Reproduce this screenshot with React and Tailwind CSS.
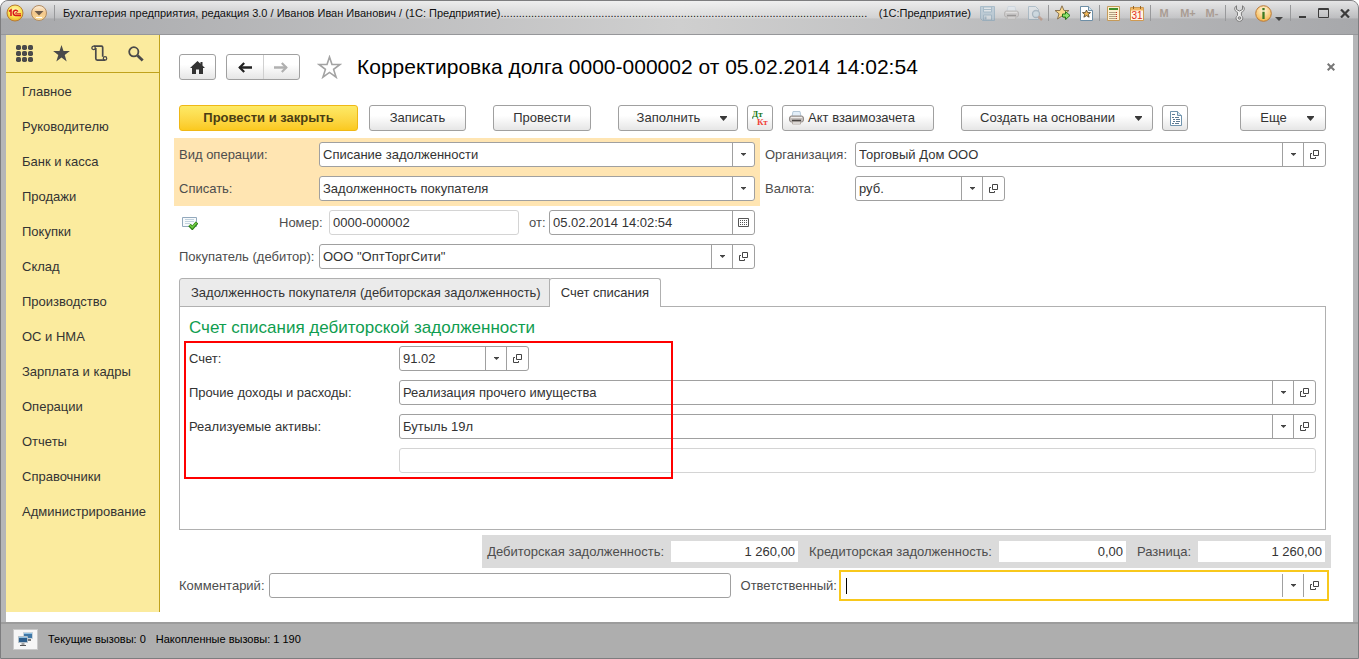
import React from 'react';

const MENU = [
  'Главное',
  'Руководителю',
  'Банк и касса',
  'Продажи',
  'Покупки',
  'Склад',
  'Производство',
  'ОС и НМА',
  'Зарплата и кадры',
  'Операции',
  'Отчеты',
  'Справочники',
  'Администрирование',
];

const TITLE =
  'Бухгалтерия предприятия, редакция 3.0 / Иванов Иван Иванович / (1С: Предприятие)' +
  '.'.repeat(120);

/* ---------- Icons ---------- */

const Caret = () => (
  <svg width="7" height="5" viewBox="0 0 7 5" fill="#3a3a3a" aria-hidden="true">
    <path d="M0 0h7v1L3.500 5 0 1z" />
  </svg>
);

const SmallCaret = () => (
  <svg width="5" height="3" viewBox="0 0 5 3" fill="#444" aria-hidden="true">
    <path d="M0 0h5v.6L2.500 3 0 .6z" />
  </svg>
);

const OpenIcon = () => (
  <svg width="9" height="9" viewBox="0 0 9 9" fill="none" stroke="#444" aria-hidden="true">
    <path d="M3.500 .5h5v5h-5zM2 3.500H.5v5h5V7" />
  </svg>
);

const CalendarIcon = () => (
  <svg width="11" height="9" viewBox="0 0 11 9" fill="none" stroke="#555" aria-hidden="true">
    <path d="M.5 .5h10v8H.5z" />
    <path d="M2 2.500h8M2 4.500h8M2 6.500h8" strokeDasharray="1 1" />
  </svg>
);

const GridIcon = () => (
  <svg width="17" height="17" viewBox="0 0 17 17" fill="#4a4a4a" aria-hidden="true">
    {[0, 6, 12].map((y) =>
      [0, 6, 12].map((x) => <rect key={`${x}-${y}`} x={x} y={y} width="5" height="5" rx="1.7" />)
    )}
  </svg>
);

const StarIcon = () => (
  <svg width="17" height="17" viewBox="0 0 17 17" fill="#4a4a4a" aria-hidden="true">
    <path d="M8.500 0l2 6.100h6.400l-5.200 3.900 2 6.400-5.200-4-5.200 4 2-6.400L.1 6.100h6.400z" />
  </svg>
);

const ScrollIcon = () => (
  <svg width="17" height="17" viewBox="0 0 17 17" fill="none" stroke="#4a4a4a" strokeWidth="1.700" aria-hidden="true">
    <path d="M2.800 1.200h7.700c.8 0 1.200.4 1.200 1.200v9.300M4.800 3v10.600c0 .9.5 1.500 1.400 1.500h8" />
    <circle cx="2.600" cy="2.900" r="1.700" strokeWidth="1.300" />
    <circle cx="14" cy="13.400" r="1.700" strokeWidth="1.300" />
  </svg>
);

const SearchIcon = () => (
  <svg width="16" height="16" viewBox="0 0 16 16" fill="none" stroke="#4a4a4a" aria-hidden="true">
    <circle cx="5.800" cy="5.800" r="4.600" strokeWidth="1.800" />
    <path d="M9.500 9.500l5.200 5" strokeWidth="2.800" />
  </svg>
);

const HomeIcon = () => (
  <svg width="15" height="13" viewBox="0 0 15 13" fill="#333" aria-hidden="true">
    <path d="M7.500 0L0 7h2v6h4V8.500h3V13h4V7h2l-2.500-2.400V1h-2v1.700z" />
  </svg>
);

const ArrowIcon = ({ color, flip }) => (
  <svg width="14" height="11" viewBox="0 0 14 11" fill="none" stroke={color} className={flip ? 'rotate-180' : ''} aria-hidden="true">
    <path d="M1.500 5.500H14" strokeWidth="2.400" />
    <path d="M6.200 .9L1.700 5.500l4.500 4.600" strokeWidth="2.200" />
  </svg>
);

const OutlineStar = () => (
  <svg width="25" height="24" viewBox="0 0 25 24" fill="#fff" stroke="#a3a3a3" strokeWidth="1.600" aria-hidden="true">
    <path d="M12.500 2l2.500 7.500h8l-6.400 4.900 2.500 7.800-6.600-4.800-6.600 4.800 2.500-7.800L2 9.500h8z" />
  </svg>
);

const PostedIcon = () => (
  <svg width="16" height="13" viewBox="0 0 16 13" aria-hidden="true">
    <path d="M.5 .5h14v9H.5z" fill="#f7fafc" stroke="#93a9bd" />
    <path d="M3 2.500h9M3 4.500h9M3 6.500h5" stroke="#c3d3df" />
    <path d="M7.500 8l2.800 3 4.700-5.500" fill="none" stroke="#2d7d16" strokeWidth="3.400" />
    <path d="M7.800 8l2.500 2.500 4.200-4.800" fill="none" stroke="#6dcb42" strokeWidth="1.700" />
  </svg>
);

const PrinterIcon = () => (
  <svg width="15" height="14" viewBox="0 0 15 14" aria-hidden="true">
    <path d="M4 .5h7l1 5H3z" fill="#e4eff9" stroke="#b5c8d8" />
    <rect x=".5" y="5" width="14" height="6" rx="2" fill="#c2bdba" stroke="#918b88" />
    <path d="M2 6.500h11" stroke="#eeebe9" />
    <path d="M3 9.500h9" stroke="#4a4644" strokeWidth="1.500" />
    <path d="M3.500 11h8v2h-8z" fill="#fff" stroke="#b5ada7" />
  </svg>
);

const ReportIcon = () => (
  <svg width="13" height="15" viewBox="0 0 13 15" fill="none" aria-hidden="true">
    <path d="M1.500 .5h7l4 4v10h-11z" fill="#fff" stroke="#6f93ad" />
    <path d="M8.500 .5v4h4" stroke="#6f93ad" fill="#d6e5ef" />
    <path d="M3 3.500h3M3 6.500h2m1 0h4M4 8.500h2m1 0h4M4 10.500h2m1 0h4M3 12.500h2m1 0h4" stroke="#5d7a92" />
  </svg>
);

const LogoIcon = () => (
  <svg width="18" height="18" viewBox="0 0 18 18" aria-hidden="true">
    <defs>
      <radialGradient id="logo" cx=".5" cy=".35" r=".7">
        <stop offset="0" stopColor="#fffbc0" />
        <stop offset=".6" stopColor="#fbe04c" />
        <stop offset="1" stopColor="#e5a41d" />
      </radialGradient>
    </defs>
    <circle cx="9" cy="9" r="8" fill="url(#logo)" stroke="#b77b35" />
    <path d="M3 7.300l2-1.300v6M11.800 7.600c-.5-1.100-1.500-1.500-2.500-1.300-3 .6-2.500 5.100.4 5.100H15" fill="none" stroke="#d8161c" strokeWidth="1.500" />
    <path d="M11.200 8.600c-1.600-.6-2.300.8-1 1.200H15" fill="none" stroke="#d8161c" />
  </svg>
);

const MenuButtonIcon = () => (
  <svg width="18" height="18" viewBox="0 0 18 18" aria-hidden="true">
    <defs>
      <linearGradient id="menu" x1="0" x2="0" y1="0" y2="1">
        <stop offset="0" stopColor="#fdf0dc" />
        <stop offset=".5" stopColor="#f3c78a" />
        <stop offset="1" stopColor="#fbdf9c" />
      </linearGradient>
    </defs>
    <circle cx="9" cy="9" r="7.500" fill="url(#menu)" stroke="#b08a62" />
    <path d="M4.500 7h9L9 11.500z" fill="#6b5a4b" />
    <path d="M6 13.500h6" stroke="#fff" />
  </svg>
);

const SaveIcon = () => (
  <svg width="15" height="15" viewBox="0 0 15 15" opacity=".55" aria-hidden="true">
    <path d="M.5 .5h14v14H2.500l-2-2z" fill="#a9c2d3" stroke="#7fa1b8" />
    <path d="M3.500 1h8v5h-8z" fill="#e3ebf0" stroke="#7fa1b8" />
    <path d="M4 3.500h7" stroke="#7fa1b8" />
    <path d="M3.500 9h8v5h-8z" fill="#d7e0e6" stroke="#7fa1b8" />
    <path d="M5.500 10.500v3" stroke="#7fa1b8" strokeWidth="2" />
  </svg>
);

const PreviewIcon = () => (
  <svg width="15" height="15" viewBox="0 0 15 15" opacity=".6" aria-hidden="true">
    <path d="M.5 .5h7l3 3v10H.5z" fill="#dfe5ea" stroke="#91a9ba" />
    <circle cx="8" cy="8" r="3.500" fill="#c9dbe6" stroke="#8da3b3" strokeWidth="1.300" />
    <path d="M10.500 10.500l3.500 3.500" stroke="#b98a72" strokeWidth="2.500" />
  </svg>
);

const AddFavoriteIcon = () => (
  <svg width="17" height="16" viewBox="0 0 17 16" aria-hidden="true">
    <path d="M8 .8l2 4.700h5l-4 3.300 1.500 5.200L8 11l-4.500 3L5 8.800 1 5.500h5z" fill="#fbd98c" stroke="#8a7350" />
    <path d="M8.500 9h3V6.500L16 10.500l-4.500 4V12h-3z" fill="#8fe36b" stroke="#25751a" />
  </svg>
);

const FavoritesIcon = () => (
  <svg width="13" height="15" viewBox="0 0 13 15" aria-hidden="true">
    <path d="M.5 .5h8l4 4v10H.5z" fill="#fff" stroke="#6d8ea6" />
    <path d="M8.500 .5v4h4" fill="#d6e5ef" stroke="#6d8ea6" />
    <path d="M6.500 4l1.200 2.600h2.800L8.300 8.400l.8 2.800-2.600-1.600-2.600 1.600.8-2.800-2.200-1.800h2.800z" fill="#f4b95a" stroke="#57492f" strokeWidth=".9" />
  </svg>
);

const CalculatorIcon = () => (
  <svg width="13" height="15" viewBox="0 0 13 15" aria-hidden="true">
    <path d="M.5 .5h12v14H.5z" fill="#fdf0d0" stroke="#c49a5a" />
    <path d="M2 3h9" stroke="#3f8f2c" strokeWidth="2" />
    <path d="M2.500 6.500h8M2.500 8.500h8M2.500 10.500h8M2.500 12.500h8" stroke="#6a5238" strokeDasharray="1 1" />
    <path d="M9.500 6v7" stroke="#d0342c" strokeDasharray="1 1" />
  </svg>
);

const DateIcon = () => (
  <svg width="14" height="15" viewBox="0 0 14 15" aria-hidden="true">
    <path d="M.5 1.500h13v13H.5z" fill="#fff6e4" stroke="#cf9a52" />
    <path d="M1 2h12v2.500H1z" fill="#f2b661" />
    <path d="M3.500 0v3M10.500 0v3" stroke="#946427" />
    <text x="7" y="13" textAnchor="middle" fontFamily="Liberation Sans, sans-serif" fontSize="10" fill="#df2a22">31</text>
  </svg>
);

const WrenchIcon = () => (
  <svg width="11" height="17" viewBox="0 0 11 17" aria-hidden="true">
    <path d="M2.500 .8C.7 1.600 .2 4 1.200 5.600c.6.900 1.600 1.300 2.300 1.700v3.200c-1.600 1-2 3.200-.8 4.700 1.500 1.700 4.300 1.500 5.500-.2 1-1.600.6-3.600-.8-4.500V7.300c.8-.4 1.800-.8 2.400-1.700C10.800 4 10.300 1.600 8.500 .8v3.700l-3 1.500-3-1.500z" fill="#ececec" stroke="#7a7a7a" />
    <circle cx="5.500" cy="13" r="1.300" fill="#bbb" stroke="#7a7a7a" />
  </svg>
);

const InfoIcon = () => (
  <svg width="17" height="17" viewBox="0 0 17 17" aria-hidden="true">
    <defs>
      <radialGradient id="info" cx=".5" cy=".3" r=".75">
        <stop offset="0" stopColor="#fff6dd" />
        <stop offset="1" stopColor="#f5b13f" />
      </radialGradient>
    </defs>
    <circle cx="8.500" cy="8.500" r="7.800" fill="url(#info)" stroke="#b97a3a" />
    <path d="M8.500 3v2.300M8.500 6.800V14" stroke="#3d7a22" strokeWidth="2.300" />
  </svg>
);

const MonitorsIcon = () => (
  <svg width="15" height="14" viewBox="0 0 15 14" aria-hidden="true">
    <path d="M5.500 .5h9v6h-9z" fill="#3f77a6" stroke="#c9d3da" />
    <path d="M6 1.500h8" stroke="#8fc0e2" />
    <path d="M10 8h3" stroke="#777" strokeWidth="2" />
    <path d="M.5 4.500h9v6h-9z" fill="#2d5f8d" stroke="#b5c1c9" />
    <path d="M1 5.500h8" stroke="#8fc0e2" />
    <path d="M3.500 12h3M2 13.500h6" stroke="#555" />
  </svg>
);

/* ---------- Controls ---------- */

const Separator = () => <span className="mx-px h-4 w-px bg-[#98999b]" />;

const TitleButton = ({ label, children }) => (
  <button type="button" aria-label={label} className="flex h-5 w-6 items-center justify-center">
    {children}
  </button>
);

const WindowButton = ({ label, children }) => (
  <button type="button" aria-label={label} className="flex h-5 w-[21px] items-center justify-center">
    {children}
  </button>
);

const ToolButton = ({ className = '', label, children }) => (
  <button
    type="button"
    aria-label={label}
    className={`flex h-[26px] shrink-0 items-center justify-center rounded-[3px] border border-[#a0a0a0] bg-gradient-to-b from-white from-40% to-[#e6e6e6] text-[#333] ${className}`}
  >
    {children}
  </button>
);

const CellButton = ({ label, children }) => (
  <button
    type="button"
    aria-label={label}
    className="flex w-[21px] shrink-0 items-center justify-center self-stretch border-l border-[#a0a0a0]"
  >
    {children}
  </button>
);

const Field = ({ id, value = '', className = 'flex-1', muted, picker, open, calendar }) => (
  <div
    className={`flex h-[25px] min-w-0 items-center overflow-hidden rounded-[3px] border bg-white pr-px ${
      muted ? 'border-[#d4d4d4]' : 'border-[#a0a0a0]'
    } ${className}`}
  >
    <input id={id} defaultValue={value} readOnly={muted} className="min-w-0 flex-1 bg-transparent px-[3px] text-[#333] outline-none" />
    {picker && (
      <CellButton label="Выбрать">
        <SmallCaret />
      </CellButton>
    )}
    {open && (
      <CellButton label="Открыть">
        <OpenIcon />
      </CellButton>
    )}
    {calendar && (
      <CellButton label="Календарь">
        <CalendarIcon />
      </CellButton>
    )}
  </div>
);

const SelectField = ({ id, options }) => (
  <div className="flex h-[25px] min-w-0 flex-1 items-center overflow-hidden rounded-[3px] border border-[#a0a0a0] bg-white pr-px">
    <select id={id} className="min-w-0 flex-1 appearance-none bg-transparent px-[3px] text-[#333] outline-none">
      {options.map((o) => (
        <option key={o}>{o}</option>
      ))}
    </select>
    <span className="pointer-events-none flex w-[21px] items-center justify-center self-stretch border-l border-[#a0a0a0]">
      <SmallCaret />
    </span>
  </div>
);

const Row = ({ children }) => <div className="flex h-[34px] pt-1 leading-[25px]">{children}</div>;

const Total = ({ id, label, value }) => (
  <div className="flex items-center gap-[7px]">
    <label htmlFor={id}>{label}</label>
    <input id={id} readOnly defaultValue={value} className="h-[21px] w-[127px] bg-white px-[3px] text-right text-[#333] outline-none" />
  </div>
);

/* ---------- Page parts ---------- */

const TitleBar = () => (
  <header className="flex h-[34px] items-start border-b border-[#96979a] bg-[linear-gradient(to_bottom,rgba(255,255,255,0.7),rgba(255,255,255,0.25)_50%,transparent_55%),linear-gradient(to_right,#a7a8ab,#cfcfcf_50%,#a7a8ab)] pr-[3px] text-[11px] text-[#111]">
    <div className="flex h-6 items-center gap-1.5 pl-[5px]">
      <button type="button" aria-label="1С"><LogoIcon /></button>
      <button type="button" aria-label="Главное меню"><MenuButtonIcon /></button>
      <span className="h-4 w-px bg-[#98999b]" />
    </div>
    <div className="flex h-6 min-w-0 flex-1 items-center justify-between gap-1 pl-2">
      <span className="truncate">{TITLE}</span>
      <span className="shrink-0">(1С:Предприятие)</span>
    </div>
    <div className="flex h-6 shrink-0 items-center pl-1">
      <TitleButton label="Сохранить"><SaveIcon /></TitleButton>
      <TitleButton label="Печать"><span className="opacity-40"><PrinterIcon /></span></TitleButton>
      <TitleButton label="Предварительный просмотр"><PreviewIcon /></TitleButton>
      <Separator />
      <TitleButton label="Добавить в избранное"><AddFavoriteIcon /></TitleButton>
      <TitleButton label="Избранное"><FavoritesIcon /></TitleButton>
      <Separator />
      <TitleButton label="Калькулятор"><CalculatorIcon /></TitleButton>
      <TitleButton label="Календарь"><DateIcon /></TitleButton>
      <Separator />
      {['M', 'M+', 'M-'].map((m) => (
        <button key={m} type="button" className="h-5 w-6 font-bold text-[#a99c93]">{m}</button>
      ))}
      <Separator />
      <TitleButton label="Настройки"><WrenchIcon /></TitleButton>
      <TitleButton label="Справка"><InfoIcon /></TitleButton>
      <button type="button" aria-label="Еще" className="flex h-5 w-3.5 items-end pb-0.5">
        <svg width="8" height="4" viewBox="0 0 8 4" fill="#444"><path d="M0 0h8L4 4z" /></svg>
      </button>
      <Separator />
      <WindowButton label="Свернуть">
        <svg width="7" height="9" viewBox="0 0 7 9" fill="#3c3c3c"><path d="M0 7h7v2H0z" /></svg>
      </WindowButton>
      <WindowButton label="Развернуть">
        <svg width="11" height="10" viewBox="0 0 11 10" fill="none" stroke="#3c3c3c"><path d="M.5 .5h10v9H.5zM0 1.500h11" /></svg>
      </WindowButton>
      <WindowButton label="Закрыть">
        <svg width="10" height="9" viewBox="0 0 10 9" stroke="#3c3c3c" strokeWidth="2.200"><path d="M1 .5l8 8M9 .5l-8 8" /></svg>
      </WindowButton>
    </div>
  </header>
);

const Sidebar = () => (
  <aside className="mb-2.5 w-[154px] shrink-0 border-r border-[#c0a21c] bg-[#fbeb9e]">
    <div className="flex h-[38px] items-center justify-between border-b border-[#c0a21c] pl-2.5 pr-[15px]">
      <button type="button" aria-label="Разделы"><GridIcon /></button>
      <button type="button" aria-label="Избранное"><StarIcon /></button>
      <button type="button" aria-label="История"><ScrollIcon /></button>
      <button type="button" aria-label="Поиск"><SearchIcon /></button>
    </div>
    <nav>
      {MENU.map((item) => (
        <a key={item} href="#" className="block h-[35px] whitespace-nowrap pl-4 leading-[38px] text-[#333]">
          {item}
        </a>
      ))}
    </nav>
  </aside>
);

const Toolbar = () => (
  <div className="mt-[25px] flex items-center">
    <button
      type="button"
      className="h-[26px] w-[179px] shrink-0 rounded-[3px] border border-[#efb816] bg-gradient-to-b from-[#fdea66] to-[#fbc91d] font-bold text-[#4a3d14]"
    >
      Провести и закрыть
    </button>
    <ToolButton className="ml-[11px] w-[97px]">Записать</ToolButton>
    <ToolButton className="ml-[27px] w-[98px]">Провести</ToolButton>
    <ToolButton className="ml-[27px] w-[120px] gap-5 pl-2">Заполнить <Caret /></ToolButton>
    <ToolButton className="ml-[9px] w-[26px]" label="Дт/Кт">
      <svg width="17" height="17" viewBox="0 0 17 17" fontFamily="Liberation Serif, serif" fontWeight="bold" fontSize="9" aria-hidden="true">
        <text x="0" y="7" fill="#1d7a1d">Дт</text>
        <text x="5" y="15" fill="#f0433c">Кт</text>
      </svg>
    </ToolButton>
    <ToolButton className="ml-[9px] w-[152px] gap-1 pr-3"><PrinterIcon />Акт взаимозачета</ToolButton>
    <ToolButton className="ml-[27px] w-[192px] gap-5 pl-2">Создать на основании <Caret /></ToolButton>
    <ToolButton className="ml-[9px] w-[26px]" label="Отчет"><ReportIcon /></ToolButton>
    <ToolButton className="ml-auto w-[86px] gap-5 pl-2">Еще <Caret /></ToolButton>
  </div>
);

const DocumentForm = () => (
  <div className="mt-[7px] grid grid-cols-[575fr_562fr] gap-x-2.5 text-[#4d4d4d]">
    <div>
      <div className="-mx-[5px] bg-[#ffe5b2] px-[5px]">
        <Row>
          <label htmlFor="operation" className="w-[140px] shrink-0">Вид операции:</label>
          <SelectField id="operation" options={['Списание задолженности']} />
        </Row>
        <Row>
          <label htmlFor="writeoff" className="w-[140px] shrink-0">Списать:</label>
          <SelectField id="writeoff" options={['Задолженность покупателя']} />
        </Row>
      </div>
      <Row>
        <span className="w-[100px] shrink-0 pl-[3px] pt-[7px]"><PostedIcon /></span>
        <label htmlFor="number" className="w-[50px] shrink-0">Номер:</label>
        <Field id="number" value="0000-000002" muted className="w-[190px]" />
        <label htmlFor="date" className="w-[30px] shrink-0 pl-2.5">от:</label>
        <Field id="date" value="05.02.2014 14:02:54" calendar />
      </Row>
      <Row>
        <label htmlFor="buyer" className="w-[140px] shrink-0 whitespace-nowrap">Покупатель (дебитор):</label>
        <Field id="buyer" value={'ООО "ОптТоргСити"'} picker open />
      </Row>
    </div>
    <div>
      <Row>
        <label htmlFor="org" className="w-[90px] shrink-0">Организация:</label>
        <Field id="org" value="Торговый Дом ООО" picker open />
      </Row>
      <Row>
        <label htmlFor="currency" className="w-[90px] shrink-0">Валюта:</label>
        <Field id="currency" value="руб." picker open className="w-[150px]" />
      </Row>
    </div>
  </div>
);

const WriteOffTabs = () => (
  <div className="mt-1 flex flex-1 flex-col text-[#333]">
    <div role="tablist" className="flex h-[29px]">
      <button type="button" role="tab" aria-selected="false" className="rounded-tl-[3px] border border-[#b0b0b0] bg-[#ebebeb] pl-[11px] pr-2">
        Задолженность покупателя (дебиторская задолженность)
      </button>
      <button
        type="button"
        role="tab"
        aria-selected="true"
        className="z-10 -ml-px rounded-t-[3px] border border-b-0 border-[#b0b0b0] bg-white px-[11px]"
      >
        Счет списания
      </button>
    </div>
    <div role="tabpanel" className="-mt-px flex-1 border border-[#b0b0b0] px-[9px]">
      <h2 className="h-[35px] text-[17px] leading-[42px] text-[#0f9d4f]">Счет списания дебиторской задолженности</h2>
      <div className="relative">
        <Row>
          <label htmlFor="account" className="w-[210px] shrink-0">Счет:</label>
          <Field id="account" value="91.02" picker open className="w-[130px]" />
        </Row>
        <Row>
          <label htmlFor="income" className="w-[210px] shrink-0">Прочие доходы и расходы:</label>
          <Field id="income" value="Реализация прочего имущества" picker open />
        </Row>
        <Row>
          <label htmlFor="assets" className="w-[210px] shrink-0">Реализуемые активы:</label>
          <Field id="assets" value="Бутыль 19л" picker open />
        </Row>
        <Row>
          <span className="w-[210px] shrink-0" />
          <Field muted />
        </Row>
        {/* highlighted area */}
        <div className="pointer-events-none absolute -bottom-px -left-[5px] -top-px w-[489px] border-2 border-[#f00]" />
      </div>
    </div>
  </div>
);

const DocumentFooter = () => (
  <div className="text-[#4d4d4d]">
    <div className="-mr-[5px] mt-[5px] flex justify-end">
      <div className="flex h-[33px] items-center gap-[11px] bg-[#dbdbdb] pl-[5px] pr-1.5">
        <Total id="debit" label="Дебиторская задолженность:" value="1 260,00" />
        <Total id="credit" label="Кредиторская задолженность:" value="0,00" />
        <Total id="diff" label="Разница:" value="1 260,00" />
      </div>
    </div>
    <div className="-mr-[3px] mt-0.5 flex items-center">
      <label htmlFor="comment" className="w-[90px] shrink-0">Комментарий:</label>
      <Field id="comment" className="flex-[459]" />
      <label htmlFor="responsible" className="w-[108px] shrink-0 pl-2.5">Ответственный:</label>
      <div className="flex h-[31px] flex-[481] items-center border-2 border-[#f8c81c] bg-white px-[3px]">
        <span className="ml-0.5 h-4 w-px bg-black" />
        <input id="responsible" className="min-w-0 flex-1 bg-transparent caret-transparent outline-none" />
        <span className="flex h-[23px]">
          <CellButton label="Выбрать"><SmallCaret /></CellButton>
          <CellButton label="Открыть"><OpenIcon /></CellButton>
        </span>
      </div>
    </div>
  </div>
);

const StatusBar = () => (
  <footer className="flex h-[36px] items-center gap-2.5 border-t-2 border-[#9c9c9c] bg-[#aeaeae] px-3 pb-1 text-[11px] text-black">
    <button type="button" aria-label="Соединение" className="flex h-[21px] w-[25px] items-center justify-center border border-[#c9c9c9] bg-[#f6f6f6]">
      <MonitorsIcon />
    </button>
    <span>Текущие вызовы: 0</span>
    <span>Накопленные вызовы: 1 190</span>
  </footer>
);

const App = () => (
  <div className='flex min-h-screen flex-col overflow-hidden rounded-t-lg border border-[#7d7d7f] bg-[#aeaeae] font-["Liberation_Sans",Arial,sans-serif] text-[13px]'>
    <TitleBar />
    <div className="flex flex-1 border-x-[5px] border-[#b5b6b8] bg-white">
      <Sidebar />
      <main className="flex min-w-0 flex-1 flex-col pb-[21px] pl-[19px] pr-[27px] pt-[19px]">
        <div className="-mr-[9px] flex h-[26px] items-center">
          <ToolButton className="w-[37px]" label="Начальная страница"><HomeIcon /></ToolButton>
          <div className="ml-2.5 flex h-[26px] w-[74px] shrink-0 rounded-[3px] border border-[#a0a0a0] bg-gradient-to-b from-white from-40% to-[#e6e6e6]">
            <button type="button" aria-label="Назад" className="flex flex-1 items-center justify-center border-r border-[#d0d0d0]">
              <ArrowIcon color="#222" />
            </button>
            <button type="button" aria-label="Вперед" className="flex flex-1 items-center justify-center">
              <ArrowIcon color="#b0b0b0" flip />
            </button>
          </div>
          <button type="button" aria-label="В избранное" className="ml-[17px]"><OutlineStar /></button>
          <h1 className="ml-[15px] truncate text-[21px] leading-7 text-black">
            Корректировка долга 0000-000002 от 05.02.2014 14:02:54
          </h1>
          <button type="button" aria-label="Закрыть" className="ml-auto">
            <svg width="8" height="8" viewBox="0 0 8 8" stroke="#777" strokeWidth="2"><path d="M.7 .7l6.600 6.600M7.300 .7L.7 7.300" /></svg>
          </button>
        </div>
        <Toolbar />
        <DocumentForm />
        <WriteOffTabs />
        <DocumentFooter />
      </main>
    </div>
    <StatusBar />
  </div>
);

export default App;
